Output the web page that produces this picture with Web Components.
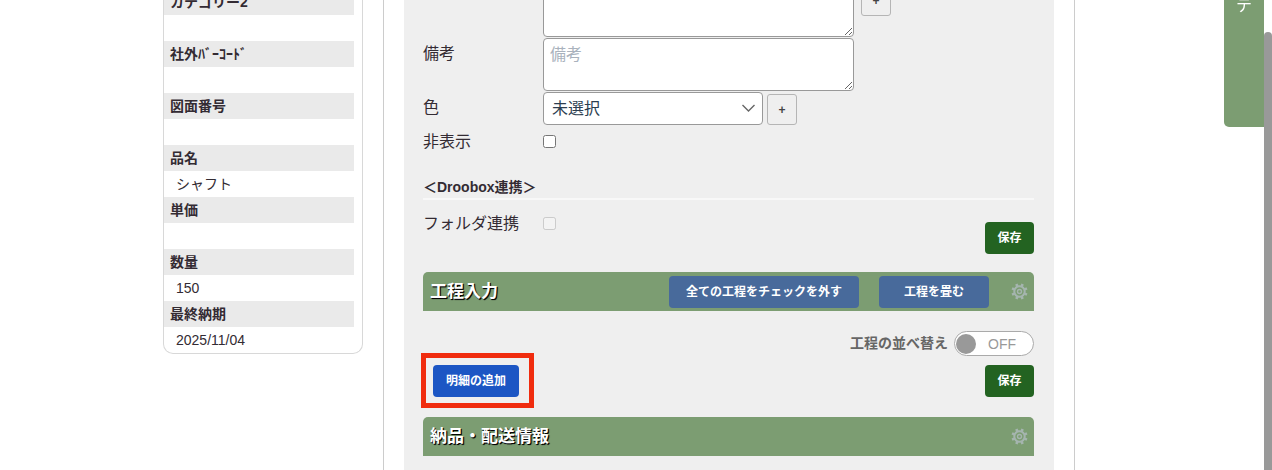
<!DOCTYPE html>
<html lang="ja">
<head>
<meta charset="UTF-8">
<meta name="viewport" content="width=device-width, initial-scale=1">
<title>工程入力</title>
<style>
  html, body { margin: 0; height: 100%; overflow: hidden; background: #fff; }
  body {
    font-family: "Liberation Sans", "Noto Sans CJK JP", sans-serif;
    font-size: 16px;
    color: #332b33;
  }
</style>
</head>
<body>
<app-page>
  <item-summary slot="side"></item-summary>
  <work-form></work-form>
  <section-bar heading="工程入力">
    <action-button kind="blue" style="--w: 190px">全ての工程をチェックを外す</action-button>
    <action-button kind="blue" style="--w: 110px">工程を畳む</action-button>
  </section-bar>
  <process-tools></process-tools>
  <section-bar heading="納品・配送情報"></section-bar>
</app-page>
<side-tab>テ</side-tab>
<page-scrollbar></page-scrollbar>

<script>
class AppPage extends HTMLElement {
  connectedCallback() {
    this.attachShadow({ mode: 'open' });
    this.shadowRoot.innerHTML = `
      <style>
        :host {
          display: flex;
          gap: 20px;
          min-height: 100%;
          box-sizing: border-box;
          padding: 0 197px 0 163px;
        }
        aside { flex: 0 0 200px; }
        main {
          flex: 1;
          min-width: 0;
          display: flex;
          padding: 0 20px;
          border: solid #ccc;
          border-width: 0 1px;
        }
        .panel {
          flex: 1;
          min-width: 0;
          padding: 0 20px 0 19px;
          background: #efefef;
        }
      </style>
      <aside><slot name="side"></slot></aside>
      <main><div class="panel"><slot></slot></div></main>
    `;
  }
}
customElements.define('app-page', AppPage);

class ItemSummary extends HTMLElement {
  connectedCallback() {
    const rows = [
      ['カテゴリー2', ''],
      ['社外ﾊﾞｰｺｰﾄﾞ', ''],
      ['図面番号', ''],
      ['品名', 'シャフト'],
      ['単価', ''],
      ['数量', '150'],
      ['最終納期', '2025/11/04'],
    ];
    this.attachShadow({ mode: 'open' });
    this.shadowRoot.innerHTML = `
      <style>
        :host { display: block; font-size: 14px; line-height: 26px; }
        dl {
          margin: 0;
          padding-right: 8px;
          border: 1px solid #d8d8d8;
          border-top: 0;
          border-radius: 0 0 10px 10px;
        }
        dt, dd { height: 26px; margin: 0; }
        dt { padding-left: 6px; background: #eaeaea; font-weight: bold; }
        dd { padding-left: 12px; }
        /* the list is scrolled part of a row past the top edge */
        dt:first-child {
          display: flex;
          align-items: flex-end;
          height: 15px;
          overflow: hidden;
        }
      </style>
      <dl>${rows.map(([k, v]) => `<dt>${k}</dt><dd>${v}</dd>`).join('')}</dl>
    `;
  }
}
customElements.define('item-summary', ItemSummary);

class ActionButton extends HTMLElement {
  connectedCallback() {
    this.attachShadow({ mode: 'open' });
    this.shadowRoot.innerHTML = `
      <style>
        :host { display: inline-flex; --bg: #236321; }
        :host([kind="blue"]) { --bg: #486a9b; }
        :host([kind="primary"]) { --bg: #1c56c4; }
        button {
          width: var(--w, 49px);
          height: 32px;
          padding: 0 0 3px;
          border: 0;
          border-radius: 4px;
          background: var(--bg);
          color: #fff;
          font: bold 12px "Liberation Sans", "Noto Sans CJK JP", sans-serif;
          white-space: nowrap;
        }
      </style>
      <button type="button"><slot></slot></button>
    `;
  }
}
customElements.define('action-button', ActionButton);

class WorkForm extends HTMLElement {
  connectedCallback() {
    this.attachShadow({ mode: 'open' });
    this.shadowRoot.innerHTML = `
      <style>
        :host { display: block; }
        .row { display: flex; align-items: flex-start; margin-bottom: 1px; }
        .row > label { flex: 0 0 120px; line-height: 32px; }
        textarea, select {
          box-sizing: border-box;
          margin: 0;
          border: 1px solid #999;
          border-radius: 4px;
          background: #fff;
          font: inherit;
        }
        textarea {
          width: 311px;
          height: 53px;
          padding: 2px 6px;
          resize: vertical;
        }
        textarea::placeholder { color: #a9b2bd; }
        .pick { display: grid; width: 220px; }
        .pick > * { grid-area: 1 / 1; }
        select {
          width: 100%;
          height: 33px;
          padding: 0 8px;
          appearance: none;
          color: #2c3e50;
        }
        .pick svg {
          justify-self: end;
          align-self: center;
          margin-right: 7px;
          pointer-events: none;
        }
        .add {
          width: 30px;
          height: 31px;
          padding: 0;
          border: 1px solid #b5b5b5;
          border-radius: 3px;
          background: #efefef;
          color: #444;
          font: bold 12px "Liberation Sans", sans-serif;
        }
        .pick + .add { align-self: flex-end; margin-left: 4px; }
        .clipped { height: 37px; align-items: flex-end; overflow: hidden; }
        .clipped .add { margin: 0 0 21px 7px; }
        .check { margin: 0; }
        input[type=checkbox] { width: 13px; height: 13px; margin: 9px 0 0; }
        h3 {
          margin: 19px 0 8px;
          border-bottom: 2px solid #f8f8f8;
          font-size: 14px;
          line-height: 21px;
        }
        .folder { display: flex; justify-content: space-between; align-items: flex-start; }
        .folder action-button { margin-top: 14px; }
      </style>
      <div class="row clipped">
        <label for="memo"></label>
        <textarea id="memo" aria-label="メモ"></textarea>
        <button class="add" type="button">+</button>
      </div>
      <div class="row">
        <label for="note">備考</label>
        <textarea id="note" placeholder="備考"></textarea>
      </div>
      <div class="row">
        <label for="color">色</label>
        <div class="pick">
          <select id="color"><option>未選択</option></select>
          <svg width="15" height="9" viewBox="0 0 15 9" fill="none" stroke="#666" stroke-width="1.4"><path d="M1.5 1l6 6 6-6"/></svg>
        </div>
        <button class="add" type="button">+</button>
      </div>
      <div class="row check">
        <label for="hidden">非表示</label>
        <input id="hidden" type="checkbox">
      </div>
      <h3>＜Droobox連携＞</h3>
      <div class="folder">
        <div class="row check">
          <label for="folder">フォルダ連携</label>
          <input id="folder" type="checkbox" disabled>
        </div>
        <action-button>保存</action-button>
      </div>
    `;
  }
}
customElements.define('work-form', WorkForm);

class SectionBar extends HTMLElement {
  connectedCallback() {
    this.attachShadow({ mode: 'open' });
    this.shadowRoot.innerHTML = `
      <style>
        :host {
          display: flex;
          align-items: center;
          gap: 20px;
          height: 39px;
          margin-top: 18px;
          padding: 0 6px 0 7px;
          border-radius: 5px 5px 0 0;
          background: #7c9d72;
        }
        h2 {
          flex: 1;
          margin: 0;
          color: #fff;
          font-size: 17px;
          line-height: 24px;
          text-shadow: 1px 1px 1px #000, 1px 1px 0 #222;
        }
        .gear {
          display: flex;
          margin-left: 2px;
          padding: 0;
          border: 0;
          background: none;
          color: #a5b5af;
        }
      </style>
      <h2>${this.getAttribute('heading')}</h2>
      <slot></slot>
      <button class="gear" type="button" aria-label="設定">
        <svg width="17" height="17" viewBox="0 0 17 17" fill="none" stroke="currentColor">
          <circle cx="8.5" cy="8.5" r="5.2" stroke-width="2"/>
          <circle cx="8.5" cy="8.5" r="2" stroke-width="1.4"/>
          <g stroke-width="2.6">${[22.5, 67.5, 112.5, 157.5, 202.5, 247.5, 292.5, 337.5].map(a =>
            `<path d="M8.5 .4v2.6" transform="rotate(${a} 8.5 8.5)"/>`).join('')}</g>
        </svg>
      </button>
    `;
  }
}
customElements.define('section-bar', SectionBar);

class ToggleSwitch extends HTMLElement {
  connectedCallback() {
    this.attachShadow({ mode: 'open' });
    this.shadowRoot.innerHTML = `
      <style>
        :host { display: block; }
        label {
          display: flex;
          align-items: center;
          gap: 6px;
          color: #666;
          font-size: 14px;
          font-weight: bold;
          line-height: 20px;
        }
        .text { padding-bottom: 2px; }
        .track {
          display: flex;
          align-items: center;
          box-sizing: border-box;
          width: 80px;
          height: 25px;
          padding-left: 1px;
          border: 1px solid #aaa;
          border-radius: 13px;
          background: #fff;
          color: #999;
          font-weight: normal;
        }
        input {
          appearance: none;
          width: 20px;
          height: 20px;
          margin: 0 12px 0 0;
          border-radius: 50%;
          background: #999;
        }
      </style>
      <label>
        <span class="text"><slot></slot></span>
        <span class="track"><input type="checkbox" role="switch">OFF</span>
      </label>
    `;
  }
}
customElements.define('toggle-switch', ToggleSwitch);

class ProcessTools extends HTMLElement {
  connectedCallback() {
    this.attachShadow({ mode: 'open' });
    this.shadowRoot.innerHTML = `
      <style>
        :host { display: block; padding-top: 20px; }
        .sort { display: flex; justify-content: flex-end; }
        .actions {
          display: flex;
          justify-content: space-between;
          margin: 9px 0 20px;
          padding-left: 10px;
        }
        .marked { position: relative; display: flex; }
        /* red frame laid over the button */
        .marked::after {
          content: "";
          position: absolute;
          inset: -12px -15px -11px -12px;
          border: 5px solid #f02c0e;
          pointer-events: none;
        }
      </style>
      <div class="sort"><toggle-switch>工程の並べ替え</toggle-switch></div>
      <div class="actions">
        <span class="marked"><action-button kind="primary" style="--w: 86px">明細の追加</action-button></span>
        <action-button>保存</action-button>
      </div>
    `;
  }
}
customElements.define('process-tools', ProcessTools);

class SideTab extends HTMLElement {
  connectedCallback() {
    this.attachShadow({ mode: 'open' });
    this.shadowRoot.innerHTML = `
      <style>
        :host {
          position: fixed;
          top: 0;
          right: 8px;
          display: flex;
          justify-content: center;
          width: 40px;
          height: 127px;
          border-radius: 0 0 0 5px;
          background: #7c9d72;
          color: #fff;
          overflow: hidden;
        }
        span { margin-top: -2px; line-height: 16px; }
      </style>
      <span><slot></slot></span>
    `;
  }
}
customElements.define('side-tab', SideTab);

class PageScrollbar extends HTMLElement {
  connectedCallback() {
    this.attachShadow({ mode: 'open' });
    this.shadowRoot.innerHTML = `
      <style>
        :host {
          position: fixed;
          top: 32px;
          right: 0;
          bottom: 0;
          width: 8px;
          border-radius: 4px 4px 0 0;
          background: #999;
        }
      </style>
    `;
  }
}
customElements.define('page-scrollbar', PageScrollbar);
</script>
</body>
</html>
